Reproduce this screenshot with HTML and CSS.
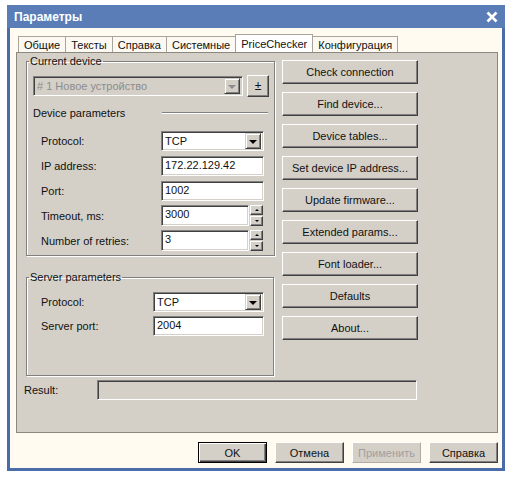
FILE: index.html
```html
<!DOCTYPE html>
<html>
<head>
<meta charset="utf-8">
<link rel="stylesheet" href="styles.css">
</head>
<body>
<div class="window">
  <div class="titlebar">
    <span class="title">Параметры</span>
    <svg class="close" width="12" height="12" viewBox="0 0 12 12"><path d="M1.5 1.5L10.5 10.5M10.5 1.5L1.5 10.5" stroke="#fff" stroke-width="2.6" fill="none"/></svg>
  </div>
  <div class="frame">
    <div class="tabs">
      <div class="tab">Общие</div>
      <div class="tab">Тексты</div>
      <div class="tab">Справка</div>
      <div class="tab">Системные</div>
      <div class="tab active">PriceChecker</div>
      <div class="tab">Конфигурация</div>
    </div>
    <div class="panel">
      <div class="cols">
        <div class="left">
          <fieldset class="group g1">
            <legend>Current device</legend>
            <div class="devrow">
              <div class="combo disabled"><span class="val">#&nbsp;1 Новое устройство</span><span class="dd"><span class="tri"></span></span></div>
              <div class="btn pm">±</div>
            </div>
            <div class="heading"><span>Device parameters</span><span class="etch"></span></div>
            <div class="fields">
              <div class="frow"><span class="lbl">Protocol:</span><div class="combo"><span class="val">TCP</span><span class="dd"><span class="tri"></span></span></div></div>
              <div class="frow"><span class="lbl">IP address:</span><div class="input">172.22.129.42</div></div>
              <div class="frow"><span class="lbl">Port:</span><div class="input">1002</div></div>
              <div class="frow sp"><span class="lbl">Timeout, ms:</span><div class="input short">3000</div><div class="spin"><span class="sb"><span class="up"></span></span><span class="sb"><span class="down"></span></span></div></div>
              <div class="frow sp"><span class="lbl">Number of retries:</span><div class="input short">3</div><div class="spin"><span class="sb"><span class="up"></span></span><span class="sb"><span class="down"></span></span></div></div>
            </div>
          </fieldset>
          <fieldset class="group g2">
            <legend>Server parameters</legend>
            <div class="fields">
              <div class="frow srow"><span class="lbl">Protocol:</span><div class="combo"><span class="val">TCP</span><span class="dd"><span class="tri"></span></span></div></div>
              <div class="frow srow"><span class="lbl">Server port:</span><div class="input">2004</div></div>
            </div>
          </fieldset>
        </div>
        <div class="right">
          <div class="btn act">Check connection</div>
          <div class="btn act">Find device...</div>
          <div class="btn act">Device tables...</div>
          <div class="btn act">Set device IP address...</div>
          <div class="btn act">Update firmware...</div>
          <div class="btn act">Extended params...</div>
          <div class="btn act">Font loader...</div>
          <div class="btn act">Defaults</div>
          <div class="btn act">About...</div>
        </div>
      </div>
      <div class="result"><span class="rlbl">Result:</span><div class="rfield"></div></div>
    </div>
    <div class="footer">
      <div class="btn fb default">OK</div>
      <div class="btn fb">Отмена</div>
      <div class="btn fb disabledbtn">Применить</div>
      <div class="btn fb">Справка</div>
    </div>
  </div>
</div>
</body>
</html>
```

FILE: styles.css
```css
* { box-sizing: border-box; }
html, body { margin: 0; padding: 0; background: #ffffff; }
body {
  font-family: "Liberation Sans", Arial, sans-serif;
  font-size: 11px;
  color: #111;
}
.window {
  margin: 5px 0 0 7px;
  width: 498px;
}
.titlebar {
  height: 23px;
  background: #5A7DB7;
  display: flex;
  align-items: center;
  justify-content: space-between;
  padding: 0 7px 0 7px;
}
.title {
  color: #fff;
  font-weight: bold;
  font-size: 12px;
}
.close { display: block; }
.frame {
  background: #FFFBF0;
  border: 3px solid #4A6CA8;
  border-top: 0;
  height: 443px;
  padding: 6px 4px 0 6px;
  display: flex;
  flex-direction: column;
}
.tabs {
  display: flex;
  align-items: flex-end;
  height: 18px;
  padding-left: 2px;
}
.tab {
  height: 16px;
  line-height: 16px;
  padding: 0 5px;
  background: #FBF9F1;
  border: 1px solid #A8A49C;
  border-bottom: 0;
  margin-right: -1px;
  white-space: nowrap;
}
.tab.active {
  height: 18px;
  line-height: 18px;
  background: #FFFFFF;
  position: relative;
  z-index: 1;
}
.panel {
  height: 381px;
  background: #D4D0C8;
  border: 1px solid #8C8880;
  padding: 2px 0 0 7px;
}
.cols {
  display: flex;
  gap: 8px;
  padding-left: 2px;
}
.left { width: 248px; }
.group {
  margin: 0;
  border: 1px solid #808080;
  box-shadow: inset 1px 1px 0 #fff, 1px 1px 0 #fff;
  padding: 0 5px 0 6px;
}
.group legend {
  padding: 0 1px;
  margin-left: -4px;
  line-height: 13px;
}
.g1 { height: 201px; }
.g2 { height: 105px; margin-top: 15px; }
.devrow {
  display: flex;
  align-items: center;
  gap: 4px;
  margin-top: 7px;
}
.combo {
  height: 20px;
  background: #fff;
  border: 1px solid;
  border-color: #808080 #fff #fff #808080;
  box-shadow: inset 1px 1px 0 #404040, inset -1px -1px 0 #D4D0C8;
  display: flex;
  align-items: center;
  justify-content: space-between;
  padding: 0 2px 0 3px;
  width: 103px;
}
.devrow .combo { width: 210px; }
.combo.disabled { background: #D4D0C8; color: #8C8C8C; }
.dd {
  width: 16px;
  height: 16px;
  background: #D4D0C8;
  border: 1px solid;
  border-color: #D4D0C8 #404040 #404040 #D4D0C8;
  box-shadow: inset 1px 1px 0 #fff, inset -1px -1px 0 #808080;
  display: flex;
  align-items: center;
  justify-content: center;
}
.tri {
  width: 0; height: 0;
  border-left: 4px solid transparent;
  border-right: 4px solid transparent;
  border-top: 4px solid #000;
  margin-top: 1px;
}
.disabled .tri { border-top-color: #8C8C8C; }
.btn {
  background: #D4D0C8;
  border: 1px solid;
  border-color: #fff #404040 #404040 #fff;
  box-shadow: inset -1px -1px 0 #808080;
  display: flex;
  align-items: center;
  justify-content: center;
  white-space: nowrap;
}
.pm { width: 22px; height: 22px; font-size: 12px; }
.heading {
  display: flex;
  align-items: center;
  margin-top: 9px;
  height: 14px;
}
.heading span:first-child { width: 129px; }
.etch {
  flex: 1;
  height: 2px;
  border-top: 1px solid #808080;
  border-bottom: 1px solid #fff;
  margin-right: 1px;
}
.fields {
  display: flex;
  flex-direction: column;
  gap: 5px;
  margin-top: 11px;
}
.g2 .fields { margin-top: 8px; gap: 4px; }
.frow {
  display: flex;
  align-items: center;
  height: 20px;
}
.frow.sp { margin-top: -1px; height: 21px; }
.frow.sp .input { height: 21px; }
.lbl { width: 128px; padding-left: 8px; }
.srow .lbl { width: 120px; }
.srow .combo, .srow .input { width: 111px; }
.input {
  width: 103px;
  height: 20px;
  background: #fff;
  border: 1px solid;
  border-color: #808080 #fff #fff #808080;
  box-shadow: inset 1px 1px 0 #404040, inset -1px -1px 0 #D4D0C8;
  padding: 0 3px;
  line-height: 17px;
}
.input.short { width: 88px; }
.spin {
  display: flex;
  flex-direction: column;
  gap: 1px;
  margin-left: 1px;
}
.sb {
  width: 13px;
  height: 10px;
  background: #D4D0C8;
  border: 1px solid;
  border-color: #fff #404040 #404040 #fff;
  box-shadow: inset -1px -1px 0 #808080;
  display: flex;
  align-items: center;
  justify-content: center;
}
.up, .down {
  width: 0; height: 0;
  border-left: 2px solid transparent;
  border-right: 2px solid transparent;
}
.up { border-bottom: 2px solid #000; }
.down { border-top: 2px solid #000; }
.right {
  display: flex;
  flex-direction: column;
  gap: 8px;
  margin-top: 5px;
}
.act { width: 136px; height: 24px; }
.result {
  display: flex;
  align-items: center;
  margin-top: 4px;
  height: 20px;
}
.rlbl { width: 73px; }
.rfield {
  width: 320px;
  height: 20px;
  border: 1px solid;
  border-color: #808080 #fff #fff #808080;
  box-shadow: inset 1px 1px 0 #404040;
}
.footer {
  display: flex;
  justify-content: flex-end;
  gap: 8px;
  margin-top: 9px;
}
.fb { width: 69px; height: 21px; }
.default {
  border: 1px solid #000;
  box-shadow: inset 1px 1px 0 #fff, inset -1px -1px 0 #404040, inset -2px -2px 0 #808080;
}
.disabledbtn {
  color: #A0A0A0;
  border-color: #fff #B0ACA4 #B0ACA4 #fff;
  box-shadow: none;
}
```
